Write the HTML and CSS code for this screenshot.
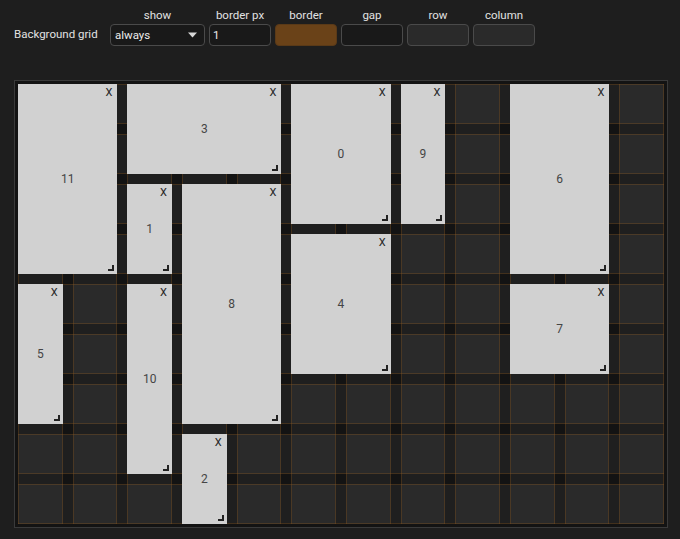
FILE: index.html
```html
<!DOCTYPE html>
<html>
<head>
<meta charset="utf-8">
<link rel="stylesheet" href="styles.css">
</head>
<body>
<div class="controls">
  <div class="title">Background grid</div>
  <div class="field">
    <div class="lbl">show</div>
    <div class="select w96"><span>always</span><svg width="9" height="6" viewBox="0 0 9 6"><path d="M0 0.5h9L4.5 5.5z" fill="#d8d8d8"/></svg></div>
  </div>
  <div class="field">
    <div class="lbl">border px</div>
    <input class="inp" type="text" value="1">
  </div>
  <div class="field">
    <div class="lbl">border</div>
    <div class="swatch sw-border"></div>
  </div>
  <div class="field">
    <div class="lbl">gap</div>
    <div class="swatch sw-gap"></div>
  </div>
  <div class="field">
    <div class="lbl">row</div>
    <div class="swatch sw-row"></div>
  </div>
  <div class="field">
    <div class="lbl">column</div>
    <div class="swatch sw-col"></div>
  </div>
</div>

<div class="board">
  <div class="grid">
    <div class="rband" style="grid-row:1"></div>
    <div class="rband" style="grid-row:2"></div>
    <div class="rband" style="grid-row:3"></div>
    <div class="rband" style="grid-row:4"></div>
    <div class="rband" style="grid-row:5"></div>
    <div class="rband" style="grid-row:6"></div>
    <div class="rband" style="grid-row:7"></div>
    <div class="rband" style="grid-row:8"></div>
    <div class="rband" style="grid-row:9"></div>
    <div class="cband" style="grid-column:1"></div>
    <div class="cband" style="grid-column:2"></div>
    <div class="cband" style="grid-column:3"></div>
    <div class="cband" style="grid-column:4"></div>
    <div class="cband" style="grid-column:5"></div>
    <div class="cband" style="grid-column:6"></div>
    <div class="cband" style="grid-column:7"></div>
    <div class="cband" style="grid-column:8"></div>
    <div class="cband" style="grid-column:9"></div>
    <div class="cband" style="grid-column:10"></div>
    <div class="cband" style="grid-column:11"></div>
    <div class="cband" style="grid-column:12"></div>

    <div class="item" style="grid-column:1/span 2;grid-row:1/span 4"><span class="x">X</span>11<span class="rh"></span></div>
    <div class="item" style="grid-column:3/span 3;grid-row:1/span 2"><span class="x">X</span>3<span class="rh"></span></div>
    <div class="item" style="grid-column:6/span 2;grid-row:1/span 3"><span class="x">X</span>0<span class="rh"></span></div>
    <div class="item" style="grid-column:8/span 1;grid-row:1/span 3"><span class="x">X</span>9<span class="rh"></span></div>
    <div class="item" style="grid-column:10/span 2;grid-row:1/span 4"><span class="x">X</span>6<span class="rh"></span></div>
    <div class="item" style="grid-column:3/span 1;grid-row:3/span 2"><span class="x">X</span>1<span class="rh"></span></div>
    <div class="item" style="grid-column:4/span 2;grid-row:3/span 5"><span class="x">X</span>8<span class="rh"></span></div>
    <div class="item" style="grid-column:6/span 2;grid-row:4/span 3"><span class="x">X</span>4<span class="rh"></span></div>
    <div class="item" style="grid-column:10/span 2;grid-row:5/span 2"><span class="x">X</span>7<span class="rh"></span></div>
    <div class="item" style="grid-column:1/span 1;grid-row:5/span 3"><span class="x">X</span>5<span class="rh"></span></div>
    <div class="item" style="grid-column:3/span 1;grid-row:5/span 4"><span class="x">X</span>10<span class="rh"></span></div>
    <div class="item" style="grid-column:4/span 1;grid-row:8/span 2"><span class="x">X</span>2<span class="rh"></span></div>
  </div>
</div>
</body>
</html>
```
FILE: styles.css
```css
* { box-sizing: border-box; }
html, body { margin: 0; background: #1e1e1e; }
body {
  padding: 9px 12px 0 14px;
  font-family: Roboto, "Liberation Sans", Arial, sans-serif;
  font-size: 11.5px;
  color: #e2e2e2;
}
.controls {
  display: flex;
  align-items: flex-end;
  gap: 4px;
  height: 37px;
}
.title {
  width: 88px;
  height: 22px;
  line-height: 21px;
  margin-right: 4px;
}
.field {
  display: flex;
  flex-direction: column;
  align-items: center;
  gap: 3px;
}
.lbl { line-height: 12px; }
.select, .inp, .swatch {
  height: 22px;
  border: 1px solid #4a4a4a;
  border-radius: 4px;
}
.select {
  width: 95px;
  background: #191919;
  display: flex;
  align-items: center;
  justify-content: space-between;
  padding: 0 7px 0 4px;
  color: #ececec;
}
.inp {
  width: 62px;
  background: #191919;
  color: #ececec;
  font: inherit;
  padding: 0 3px;
  outline: none;
}
.swatch { width: 62px; }
.sw-border { background: #6a4218; border-color: #5a3a18; }
.sw-gap { background: #191919; }
.sw-row, .sw-col { background: #2a2a2a; }

.board {
  margin-top: 34px;
  width: 654px;
  border: 1px solid #3a3a3a;
  padding: 3px;
  background: #131313;
}
.grid {
  display: grid;
  grid-template-columns: repeat(12, 1fr);
  grid-template-rows: repeat(9, 40px);
  gap: 10px;
}
.rband {
  grid-column: 1 / -1;
  background: rgba(255,255,255,0.05);
  border-top: 1px solid rgba(140,85,25,0.33);
  border-bottom: 1px solid rgba(140,85,25,0.33);
}
.cband {
  grid-row: 1 / -1;
  background: rgba(255,255,255,0.05);
  border-left: 1px solid rgba(140,85,25,0.33);
  border-right: 1px solid rgba(140,85,25,0.33);
}
.item {
  position: relative;
  z-index: 1;
  background: #d1d1d1;
  display: flex;
  align-items: center;
  justify-content: center;
  color: #454545;
  font-size: 12px;
}
.x {
  position: absolute;
  top: 3px;
  right: 5px;
  font-size: 11px;
  color: #262626;
  line-height: 12px;
}
.rh {
  position: absolute;
  right: 3px;
  bottom: 3px;
  width: 6px;
  height: 6px;
  border-right: 2px solid #222;
  border-bottom: 2px solid #222;
}
```
